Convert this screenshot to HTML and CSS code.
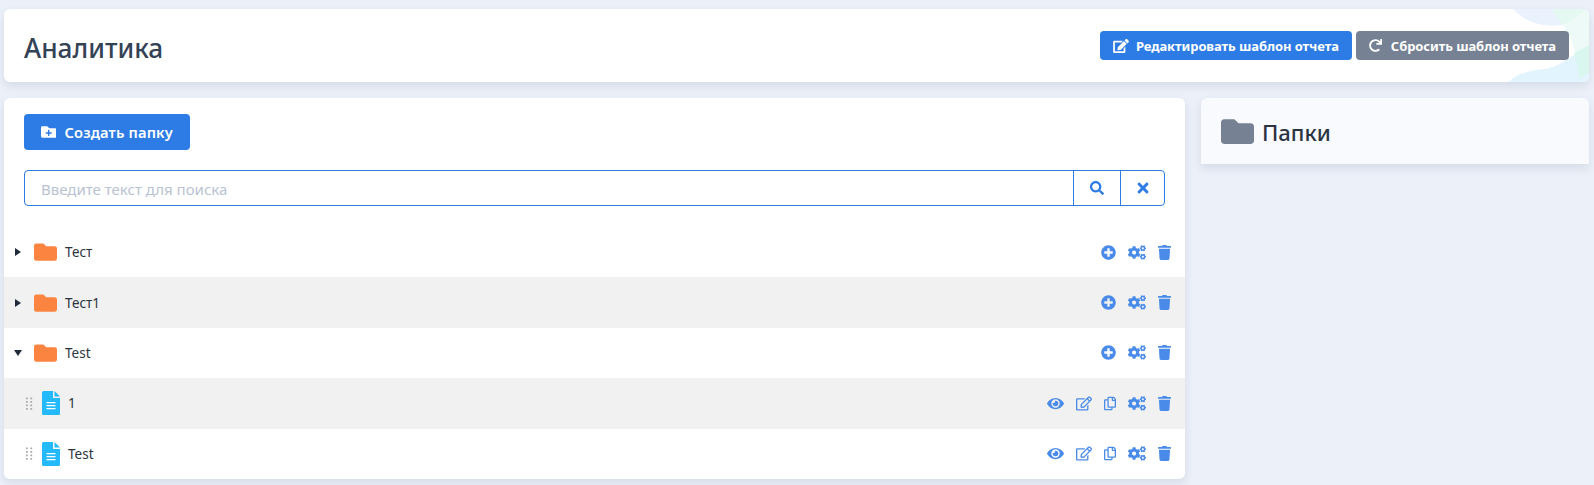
FILE: index.html
```html
<!DOCTYPE html>
<html lang="ru">
<head>
<meta charset="utf-8">
<title>Аналитика</title>
<link rel="stylesheet" href="styles.css">
</head>
<body>
<svg class="defs" width="0" height="0" aria-hidden="true">
  <symbol id="i-folder" viewBox="0 0 512 512"><path d="M464 128H272l-64-64H48C21.49 64 0 85.49 0 112v288c0 26.51 21.49 48 48 48h416c26.51 0 48-21.49 48-48V176c0-26.51-21.49-48-48-48z"/></symbol>
  <symbol id="i-folder-plus" viewBox="0 0 512 512"><path d="M464,128H272L208,64H48A48,48,0,0,0,0,112V400a48,48,0,0,0,48,48H464a48,48,0,0,0,48-48V176A48,48,0,0,0,464,128ZM359.5,296a16,16,0,0,1-16,16h-64v64a16,16,0,0,1-16,16h-16a16,16,0,0,1-16-16V312h-64a16,16,0,0,1-16-16V280a16,16,0,0,1,16-16h64V200a16,16,0,0,1,16-16h16a16,16,0,0,1,16,16v64h64a16,16,0,0,1,16,16Z"/></symbol>
  <symbol id="i-edit" viewBox="0 0 576 512"><path d="M402.6 83.2l90.2 90.2c3.8 3.8 3.8 10 0 13.8L274.4 405.6l-92.8 10.3c-12.4 1.4-22.9-9.1-21.5-21.5l10.3-92.8L388.8 83.2c3.8-3.8 10-3.8 13.8 0zm162-22.9l-48.8-48.8c-15.2-15.2-39.9-15.2-55.2 0l-35.4 35.4c-3.8 3.8-3.8 10 0 13.8l90.2 90.2c3.8 3.8 10 3.8 13.8 0l35.4-35.4c15.2-15.3 15.2-40 0-55.2zM384 346.2V448H64V128h231.8c3.2 0 6.2-1.3 8.5-3.5l40-40c7.6-7.6 2.2-20.5-8.5-20.5H48C21.5 64 0 85.5 0 112v352c0 26.5 21.5 48 48 48h352c26.5 0 48-21.5 48-48V306.2c0-10.7-12.9-16-20.5-8.5l-40 40c-2.2 2.3-3.5 5.3-3.5 8.5z"/></symbol>
  <symbol id="i-edit-o" viewBox="0 0 576 512"><path d="M402.3 344.9l32-32c5-5 13.7-1.5 13.7 5.7V464c0 26.5-21.5 48-48 48H48c-26.5 0-48-21.5-48-48V112c0-26.5 21.5-48 48-48h273.5c7.1 0 10.7 8.6 5.7 13.7l-32 32c-1.5 1.5-3.5 2.3-5.7 2.3H48v352h352V350.5c0-2.1.8-4.1 2.3-5.6zm156.6-201.8L296.3 405.7l-90.4 10c-26.2 2.9-48.5-19.2-45.6-45.6l10-90.4L432.9 17.1c22.9-22.9 59.9-22.9 82.7 0l43.2 43.2c22.9 22.9 22.9 60 .1 82.8zM460.1 174L402 115.9 216.2 301.8l-7.3 65.3 65.3-7.3L460.1 174zm64.8-79.7l-43.2-43.2c-4.1-4.1-10.8-4.1-14.8 0L436 82l58.1 58.1 30.9-30.9c4-4.2 4-10.8-.1-14.9z"/></symbol>
  <symbol id="i-redo" viewBox="0 0 512 512"><path d="M500.33 0h-47.41a12 12 0 0 0-12 12.57l4 82.76A247.42 247.42 0 0 0 256 8C119.34 8 7.9 119.53 8 256.19 8.1 393.07 119.1 504 256 504a247.1 247.1 0 0 0 166.18-63.91 12 12 0 0 0 .48-17.43l-34-34a12 12 0 0 0-16.38-.55A176 176 0 1 1 402.1 157.8l-101.53-4.87a12 12 0 0 0-12.57 12v47.41a12 12 0 0 0 12 12h200.33a12 12 0 0 0 12-12V12a12 12 0 0 0-12-12z"/></symbol>
  <symbol id="i-search" viewBox="0 0 512 512"><path d="M505 442.7L405.3 343c-4.5-4.5-10.6-7-17-7H372c27.6-35.3 44-79.7 44-128C416 93.1 322.9 0 208 0S0 93.1 0 208s93.1 208 208 208c48.3 0 92.7-16.4 128-44v16.3c0 6.4 2.5 12.5 7 17l99.7 99.7c9.4 9.4 24.6 9.4 33.9 0l28.3-28.3c9.4-9.4 9.4-24.6.1-34zM208 336c-70.7 0-128-57.2-128-128 0-70.7 57.2-128 128-128 70.7 0 128 57.2 128 128 0 70.7-57.2 128-128 128z"/></symbol>
  <symbol id="i-times" viewBox="0 0 352 512"><path d="M242.72 256l100.07-100.07c12.28-12.28 12.28-32.19 0-44.48l-22.24-22.24c-12.28-12.28-32.19-12.28-44.48 0L176 189.28 75.93 89.21c-12.28-12.28-32.19-12.28-44.48 0L9.21 111.45c-12.28 12.28-12.28 32.19 0 44.48L109.28 256 9.21 356.07c-12.28 12.28-12.28 32.19 0 44.48l22.24 22.24c12.28 12.28 32.2 12.28 44.48 0L176 322.72l100.07 100.07c12.28 12.28 32.2 12.28 44.48 0l22.24-22.24c12.28-12.28 12.28-32.19 0-44.48L242.72 256z"/></symbol>
  <symbol id="i-plus" viewBox="0 0 512 512"><path d="M256 8C119 8 8 119 8 256s111 248 248 248 248-111 248-248S393 8 256 8zm144 276c0 6.6-5.4 12-12 12h-92v92c0 6.6-5.4 12-12 12h-56c-6.6 0-12-5.4-12-12v-92h-92c-6.6 0-12-5.4-12-12v-56c0-6.6 5.4-12 12-12h92v-92c0-6.6 5.4-12 12-12h56c6.6 0 12 5.4 12 12v92h92c6.6 0 12 5.4 12 12v56z"/></symbol>
  <symbol id="i-cogs" viewBox="0 0 640 512"><path d="M512.1 191l-8.2 14.3c-3 5.3-9.4 7.5-15.1 5.4-11.8-4.4-22.6-10.7-32.1-18.6-4.6-3.8-5.8-10.5-2.8-15.7l8.2-14.3c-6.9-8-12.3-17.3-15.9-27.4h-16.5c-6 0-11.2-4.3-12.2-10.3-2-12-2.1-24.6 0-37.1 1-6 6.2-10.4 12.2-10.4h16.5c3.6-10.1 9-19.4 15.9-27.4l-8.2-14.3c-3-5.2-1.9-11.9 2.8-15.7 9.5-7.9 20.4-14.2 32.1-18.6 5.7-2.1 12.1.1 15.1 5.4l8.2 14.3c10.5-1.9 21.2-1.9 31.7 0L552 6.3c3-5.3 9.4-7.5 15.1-5.4 11.8 4.4 22.6 10.7 32.1 18.6 4.6 3.8 5.8 10.5 2.8 15.7l-8.2 14.3c6.9 8 12.3 17.3 15.9 27.4h16.5c6 0 11.2 4.3 12.2 10.3 2 12 2.1 24.6 0 37.1-1 6-6.2 10.4-12.2 10.4h-16.5c-3.6 10.1-9 19.4-15.9 27.4l8.2 14.3c3 5.2 1.9 11.9-2.8 15.7-9.5 7.9-20.4 14.2-32.1 18.6-5.7 2.1-12.1-.1-15.1-5.4l-8.2-14.3c-10.4 1.9-21.2 1.9-31.7 0zm-10.5-58.8c38.5 29.6 82.4-14.3 52.8-52.8-38.5-29.7-82.4 14.3-52.8 52.8zM386.3 286.1l33.7 16.8c10.1 5.8 14.5 18.1 10.5 29.1-8.9 24.2-26.4 46.4-42.6 65.8-7.4 8.9-20.2 11.1-30.3 5.3l-29.1-16.8c-16 13.7-34.6 24.6-54.9 31.7v33.6c0 11.6-8.3 21.6-19.7 23.6-24.6 4.2-50.4 4.4-75.9 0-11.5-2-20-11.9-20-23.6V418c-20.3-7.2-38.9-18-54.9-31.7L74 403c-10 5.8-22.9 3.6-30.3-5.3-16.2-19.4-33.3-41.6-42.2-65.7-4-10.9.4-23.2 10.5-29.1l33.3-16.8c-3.9-20.9-3.9-42.4 0-63.4L12 205.8c-10.1-5.8-14.6-18.1-10.5-29 8.9-24.2 26-46.4 42.2-65.8 7.4-8.9 20.2-11.1 30.3-5.3l29.1 16.8c16-13.7 34.6-24.6 54.9-31.7V57.1c0-11.5 8.2-21.5 19.6-23.5 24.6-4.2 50.5-4.4 76-.1 11.5 2 20 11.9 20 23.6v33.6c20.3 7.2 38.9 18 54.9 31.7l29.1-16.8c10-5.8 22.9-3.6 30.3 5.3 16.2 19.4 33.2 41.6 42.1 65.8 4 10.9.1 23.2-10 29.1l-33.7 16.8c3.9 21 3.9 42.5 0 63.5zm-117.6 21.1c59.2-77-28.7-164.9-105.7-105.7-59.2 77 28.7 164.9 105.7 105.7zm243.4 182.7l-8.2 14.3c-3 5.3-9.4 7.5-15.1 5.4-11.8-4.4-22.6-10.7-32.1-18.6-4.6-3.8-5.8-10.5-2.8-15.7l8.2-14.3c-6.9-8-12.3-17.3-15.9-27.4h-16.5c-6 0-11.2-4.3-12.2-10.3-2-12-2.1-24.6 0-37.1 1-6 6.2-10.4 12.2-10.4h16.5c3.6-10.1 9-19.4 15.9-27.4l-8.2-14.3c-3-5.2-1.9-11.9 2.8-15.7 9.5-7.9 20.4-14.2 32.1-18.6 5.7-2.1 12.1.1 15.1 5.4l8.2 14.3c10.5-1.9 21.2-1.9 31.7 0l8.2-14.3c3-5.3 9.4-7.5 15.1-5.4 11.8 4.4 22.6 10.7 32.1 18.6 4.6 3.8 5.8 10.5 2.8 15.7l-8.2 14.3c6.9 8 12.3 17.3 15.9 27.4h16.5c6 0 11.2 4.3 12.2 10.3 2 12 2.1 24.6 0 37.1-1 6-6.2 10.4-12.2 10.4h-16.5c-3.6 10.1-9 19.4-15.9 27.4l8.2 14.3c3 5.2 1.9 11.9-2.8 15.7-9.5 7.9-20.4 14.2-32.1 18.6-5.7 2.1-12.1-.1-15.1-5.4l-8.2-14.3c-10.4 1.9-21.2 1.9-31.7 0zM501.6 431c38.5 29.6 82.4-14.3 52.8-52.8-38.5-29.6-82.4 14.3-52.8 52.8z"/></symbol>
  <symbol id="i-trash" viewBox="0 0 448 512"><path d="M432 32H312l-9.4-18.7A24 24 0 0 0 281.1 0H166.8a23.72 23.72 0 0 0-21.4 13.3L136 32H16A16 16 0 0 0 0 48v32a16 16 0 0 0 16 16h416a16 16 0 0 0 16-16V48a16 16 0 0 0-16-16zM53.2 467a48 48 0 0 0 47.9 45h245.8a48 48 0 0 0 47.9-45L416 128H32z"/></symbol>
  <symbol id="i-eye" viewBox="0 0 576 512"><path d="M572.52 241.4C518.29 135.59 410.93 64 288 64S57.68 135.64 3.48 241.41a32.35 32.35 0 0 0 0 29.19C57.71 376.41 165.07 448 288 448s230.32-71.64 284.52-177.41a32.35 32.35 0 0 0 0-29.19zM288 400a144 144 0 1 1 144-144 143.93 143.93 0 0 1-144 144zm0-240a95.31 95.31 0 0 0-25.31 3.79 47.85 47.85 0 0 1-66.9 66.9A95.78 95.78 0 1 0 288 160z"/></symbol>
  <symbol id="i-copy" viewBox="0 0 448 512"><path d="M433.941 65.941l-51.882-51.882A48 48 0 0 0 348.118 0H176c-26.51 0-48 21.49-48 48v48H48c-26.51 0-48 21.49-48 48v320c0 26.51 21.49 48 48 48h224c26.51 0 48-21.49 48-48v-48h80c26.51 0 48-21.49 48-48V99.882a48 48 0 0 0-14.059-33.941zM266 464H54a6 6 0 0 1-6-6V150a6 6 0 0 1 6-6h74v224c0 26.51 21.49 48 48 48h96v42a6 6 0 0 1-6 6zm128-96H182a6 6 0 0 1-6-6V54a6 6 0 0 1 6-6h106v88c0 13.255 10.745 24 24 24h88v202a6 6 0 0 1-6 6zm6-256h-64V48h9.632c1.591 0 3.117.632 4.243 1.757l48.368 48.368a6 6 0 0 1 1.757 4.243V112z"/></symbol>
  <symbol id="i-file" viewBox="0 0 18 24"><path d="M1.5 0h9.5v7h7v15.5a1.5 1.5 0 0 1-1.5 1.5h-15A1.5 1.5 0 0 1 0 22.5V1.5A1.5 1.5 0 0 1 1.5 0z"/><path d="M12.5 0L18 5.5h-5.5z"/><path class="file-lines" d="M4.5 11h9v1.3h-9zM4.5 14h9v1.3h-9zM4.5 17h9v1.3h-9z"/></symbol>
  <symbol id="i-grip" viewBox="0 0 8 14"><path d="M0 0h2v2H0zM5 0h2v2H5zM0 4h2v2H0zM5 4h2v2H5zM0 8h2v2H0zM5 8h2v2H5zM0 12h2v2H0zM5 12h2v2H5z"/></symbol>
</svg>

<main class="page">
  <header class="card head">
    <svg class="head-deco" viewBox="0 0 110 73" aria-hidden="true">
      <path class="deco-lav" d="M34 0C46 13 64 19 84 16L110 0z"/>
      <path class="deco-mint" d="M73 0h33C100 6 94 12 84 16 80 11 76 6 73 0z"/>
      <path class="deco-pale" d="M84 16C94 12 100 6 106 0h4v36L96 44C94 34 90 24 84 16z"/>
      <path class="deco-sky" d="M30 73C38 64 50 62 66 60 80 58 88 50 110 36v37z"/>
      <path class="deco-mint2" d="M95 44L110 36V64L100 70C100 60 98 52 95 44z"/>
    </svg>
    <h1 class="title">Аналитика</h1>
    <div class="head-actions">
      <button class="btn btn-sm btn-blue"><svg class="ico-btn"><use href="#i-edit"/></svg>Редактировать шаблон отчета</button>
      <button class="btn btn-sm btn-gray"><svg class="ico-btn ico-redo"><use href="#i-redo"/></svg>Сбросить шаблон отчета</button>
    </div>
  </header>

  <div class="columns">
    <section class="card tree">
      <div class="tree-top">
        <button class="btn btn-md btn-blue"><svg class="ico-create"><use href="#i-folder-plus"/></svg>Создать папку</button>
        <div class="search">
          <input class="search-input" type="text" placeholder="Введите текст для поиска">
          <button class="search-btn search-btn-find"><svg class="ico-search"><use href="#i-search"/></svg></button>
          <button class="search-btn"><svg class="ico-times"><use href="#i-times"/></svg></button>
        </div>
      </div>

      <ul class="rows">
        <li class="row">
          <span class="caret caret-right"></span>
          <svg class="ico-folder"><use href="#i-folder"/></svg>
          <span class="name">Тест</span>
          <span class="acts">
            <svg class="a a-plus"><use href="#i-plus"/></svg>
            <svg class="a a-cogs"><use href="#i-cogs"/></svg>
            <svg class="a a-trash"><use href="#i-trash"/></svg>
          </span>
        </li>
        <li class="row row-alt">
          <span class="caret caret-right"></span>
          <svg class="ico-folder"><use href="#i-folder"/></svg>
          <span class="name">Тест1</span>
          <span class="acts">
            <svg class="a a-plus"><use href="#i-plus"/></svg>
            <svg class="a a-cogs"><use href="#i-cogs"/></svg>
            <svg class="a a-trash"><use href="#i-trash"/></svg>
          </span>
        </li>
        <li class="row">
          <span class="caret caret-down"></span>
          <svg class="ico-folder"><use href="#i-folder"/></svg>
          <span class="name">Test</span>
          <span class="acts">
            <svg class="a a-plus"><use href="#i-plus"/></svg>
            <svg class="a a-cogs"><use href="#i-cogs"/></svg>
            <svg class="a a-trash"><use href="#i-trash"/></svg>
          </span>
        </li>
        <li class="row row-alt row-file">
          <svg class="ico-grip"><use href="#i-grip"/></svg>
          <svg class="ico-file"><use href="#i-file"/></svg>
          <span class="name">1</span>
          <span class="acts">
            <svg class="a a-eye"><use href="#i-eye"/></svg>
            <svg class="a a-edit"><use href="#i-edit-o"/></svg>
            <svg class="a a-copy"><use href="#i-copy"/></svg>
            <svg class="a a-cogs"><use href="#i-cogs"/></svg>
            <svg class="a a-trash"><use href="#i-trash"/></svg>
          </span>
        </li>
        <li class="row row-file">
          <svg class="ico-grip"><use href="#i-grip"/></svg>
          <svg class="ico-file"><use href="#i-file"/></svg>
          <span class="name">Test</span>
          <span class="acts">
            <svg class="a a-eye"><use href="#i-eye"/></svg>
            <svg class="a a-edit"><use href="#i-edit-o"/></svg>
            <svg class="a a-copy"><use href="#i-copy"/></svg>
            <svg class="a a-cogs"><use href="#i-cogs"/></svg>
            <svg class="a a-trash"><use href="#i-trash"/></svg>
          </span>
        </li>
      </ul>
    </section>

    <aside class="card side">
      <svg class="ico-side"><use href="#i-folder"/></svg>
      <h2 class="side-title">Папки</h2>
    </aside>
  </div>
</main>
</body>
</html>
```

FILE: styles.css
```css
* { box-sizing: border-box; }

html, body {
  margin: 0;
  height: 100%;
}

body {
  background: #ebf0f9;
  font-family: "Noto Sans", "Open Sans", sans-serif;
  color: #212529;
  overflow: hidden;
}

.defs { position: absolute; }

.page {
  padding: 9px 5px 0 4px;
}

.card {
  background: #fff;
  border-radius: 6px;
  box-shadow: 0 4px 10px rgba(60, 75, 100, .12);
}

/* header */
.head {
  position: relative;
  overflow: hidden;
  height: 73px;
  padding: 0 20px;
  display: flex;
  align-items: center;
  justify-content: space-between;
}

.head-deco {
  position: absolute;
  right: 0;
  top: 0;
  width: 110px;
  height: 73px;
}

.deco-lav { fill: #eaf2fe; }
.deco-mint { fill: #e4f9f1; }
.deco-pale { fill: #eefaf7; }
.deco-sky { fill: #e2f4fd; }
.deco-mint2 { fill: #d9f6ef; }

.title {
  margin: 0;
  padding-top: 5px;
  font-size: 26.25px;
  font-weight: 500;
  color: #344256;
  line-height: 1;
  position: relative;
}

.head-actions {
  display: flex;
  gap: 4px;
  position: relative;
}

.btn {
  border: 0;
  border-radius: 4px;
  color: #fff;
  font-family: inherit;
  font-weight: 600;
  display: flex;
  align-items: center;
  padding: 0;
  white-space: nowrap;
}

.btn-blue { background: #2d7be5; }
.btn-gray { background: #768294; }

.btn-sm {
  height: 29px;
  font-size: 13px;
  font-weight: 700;
  letter-spacing: -.08px;
  padding: 0 13px;
}

.ico-btn {
  width: 16px;
  height: 14px;
  fill: #fff;
  margin-right: 7px;
}

.ico-redo {
  width: 13px;
  height: 13px;
  margin-right: 9px;
}

.btn-md {
  height: 36px;
  font-size: 14.7px;
  letter-spacing: .15px;
  padding: 0 17px;
  width: 166px;
}

.ico-create {
  width: 16px;
  height: 16px;
  fill: #fff;
  margin-right: 8px;
}

/* layout */
.columns {
  display: grid;
  grid-template-columns: 1181px 388px;
  gap: 16px;
  margin-top: 16px;
  align-items: start;
}

.tree-top {
  padding: 16px 20px 0;
}

.search {
  display: flex;
  height: 36px;
  margin-top: 20px;
  border: 1px solid #2d7be5;
  border-radius: 4px;
}

.search-input {
  flex: 1;
  min-width: 0;
  border: 0;
  outline: 0;
  background: transparent;
  padding: 1px 16px 0;
  font-family: inherit;
  font-size: 15px;
  color: #212529;
}

.search-input::placeholder {
  color: #b9c3d3;
  opacity: 1;
}

.search-btn {
  width: 44px;
  border: 0;
  border-left: 1px solid #2d7be5;
  background: transparent;
  padding: 0;
  display: flex;
  align-items: center;
  justify-content: center;
}

.search-btn-find { width: 47px; }

.ico-search { width: 14px; height: 14px; fill: #2d7be5; }
.ico-times { width: 12px; height: 16px; fill: #2d7be5; }

/* rows */
.rows {
  list-style: none;
  margin: 21px 0 0;
  padding: 0;
}

.row {
  height: 50.4px;
  display: flex;
  align-items: center;
  padding: 0 14px 0 11px;
}

.row-alt { background: #f1f1f2; }

.row:last-child { border-radius: 0 0 6px 6px; }

.row-file { padding-left: 22px; }

.caret {
  width: 0;
  height: 0;
  flex: none;
}

.caret-right {
  margin-right: 13px;
  border-top: 4px solid transparent;
  border-bottom: 4px solid transparent;
  border-left: 6px solid #1f2a3a;
}

.caret-down {
  margin-left: -1px;
  margin-right: 12px;
  border-left: 4.5px solid transparent;
  border-right: 4.5px solid transparent;
  border-top: 6px solid #1f2a3a;
}

.ico-folder {
  width: 23px;
  height: 24px;
  fill: #fb8440;
  margin-right: 8px;
  flex: none;
}

.ico-grip {
  width: 7px;
  height: 13px;
  fill: #a7a9ac;
  margin-right: 9px;
  flex: none;
}

.ico-file {
  width: 18px;
  height: 24px;
  fill: #24b9fb;
  margin-right: 8px;
  flex: none;
}

.file-lines { fill: #fff; }

.name {
  font-size: 13.5px;
  color: #2b3442;
}

.acts {
  margin-left: auto;
  display: flex;
  align-items: center;
  gap: 12px;
}

.a { fill: #4a8bea; height: 15px; flex: none; }
.a-plus { width: 15px; }
.a-cogs { width: 18px; height: 15px; }
.a-trash { width: 13px; height: 15px; }
.a-eye { width: 17px; }
.a-edit { width: 16px; height: 15px; }
.a-copy { width: 12px; height: 15px; }

/* side */
.side {
  height: 66px;
  background: #f9fafe;
  border-radius: 6px 6px 0 0;
  display: flex;
  align-items: center;
  padding: 0 20px;
}

.ico-side {
  width: 33px;
  height: 33px;
  fill: #768294;
  margin-right: 8px;
}

.side-title {
  margin: 0;
  padding-top: 2px;
  font-size: 22px;
  font-weight: 500;
  color: #2a3342;
}
```
